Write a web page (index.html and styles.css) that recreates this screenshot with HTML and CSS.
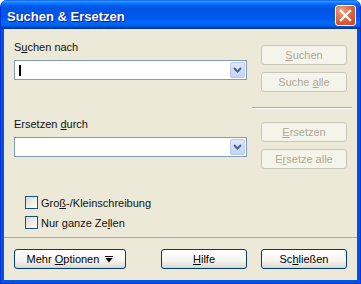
FILE: index.html
```html
<!DOCTYPE html>
<html>
<head>
<meta charset="utf-8">
<link rel="stylesheet" href="styles.css">
</head>
<body>
<div class="window">
	<div class="titlebar">
		<span class="title">Suchen &amp; Ersetzen</span>
		<span class="close">
			<svg width="13" height="13" viewBox="0 0 13 13"><path d="M2 2 L11 11 M11 2 L2 11" stroke="#fff" stroke-width="2.4" stroke-linecap="square"/></svg>
		</span>
	</div>
	<div class="client">
		<div class="group first">
			<div class="field">
				<div class="label">S<u>u</u>chen nach</div>
				<div class="combo">
					<span class="caret"></span>
					<span class="drop"><svg width="9" height="6" viewBox="0 0 9 6"><path d="M1 1 L4.5 4.5 L8 1" fill="none" stroke="#4d6185" stroke-width="2"/></svg></span>
				</div>
			</div>
			<div class="actions">
				<div class="button disabled"><u>S</u>uchen</div>
				<div class="button disabled">Suche <u>a</u>lle</div>
			</div>
		</div>
		<div class="rule"></div>
		<div class="group">
			<div class="field">
				<div class="label">Ersetzen <u>d</u>urch</div>
				<div class="combo">
					<span class="drop"><svg width="9" height="6" viewBox="0 0 9 6"><path d="M1 1 L4.5 4.5 L8 1" fill="none" stroke="#4d6185" stroke-width="2"/></svg></span>
				</div>
			</div>
			<div class="actions">
				<div class="button disabled"><u>E</u>rsetzen</div>
				<div class="button disabled">E<u>r</u>setze alle</div>
			</div>
		</div>
		<div class="options">
			<div class="check"><span class="box"></span><span>Gro<u>ß</u>-/Kleinschreibung</span></div>
			<div class="check"><span class="box"></span><span>Nur ganze Ze<u>l</u>len</span></div>
		</div>
		<div class="footer">
			<div class="button more">Mehr <u>O</u>ptionen <svg width="8" height="9" viewBox="0 0 8 9"><path d="M0 1.5 H8" stroke="#000" stroke-width="1"/><path d="M0.5 3 H7.5 L4 7.5 Z" fill="#000"/></svg></div>
			<div class="button"><u>H</u>ilfe</div>
			<div class="button">Sc<u>h</u>ließen</div>
		</div>
	</div>
</div>
</body>
</html>
```

FILE: styles.css
```css
body
{
	margin: 0;
	background: #fff;
	font-family: "Liberation Sans", Arial, sans-serif;
	font-size: 11px;
	color: #000;
}

u
{
	text-decoration-thickness: 1px;
	text-underline-offset: 1px;
}

.window
{
	width: 361px;
	height: 284px;
	box-sizing: border-box;
	display: flex;
	flex-direction: column;
	background: #0054e3;
	border: 1px solid #0831d9;
	border-top: 0;
	border-radius: 7px 7px 0 0;
	overflow: hidden;
}

.titlebar
{
	height: 29px;
	flex: none;
	display: flex;
	align-items: center;
	justify-content: space-between;
	padding: 1px 4px 0 6px;
	box-sizing: border-box;
	background: linear-gradient(to bottom, #0058ee 0%, #3593ff 4%, #288eff 7%, #127dff 10%, #036ffc 14%, #0262ee 18%, #0057e5 24%, #0054e3 30%, #0055eb 56%, #005bf5 66%, #026afe 76%, #0062ef 86%, #0052d6 92%, #0040ab 96%, #003092 100%);
}

.title
{
	color: #fff;
	font-weight: bold;
	font-size: 13px;
	text-shadow: 1px 1px #0a1883;
	padding-top: 2px;
}

.close
{
	width: 21px;
	height: 21px;
	box-sizing: border-box;
	border: 1px solid #fff;
	border-radius: 3px;
	display: flex;
	align-items: center;
	justify-content: center;
	background: radial-gradient(circle at 30% 25%, #f0a78c 0%, #e36b44 40%, #c8401a 100%);
}

.client
{
	flex: 1;
	margin: 0 3px 3px;
	background: #ece9d8;
	display: flex;
	flex-direction: column;
	padding: 0 10px;
}

.group
{
	display: flex;
	gap: 14px;
}

.group.first
{
	margin-top: 16px;
}

.field
{
	width: 233px;
	margin-top: -5px;
}

.label
{
	line-height: 14px;
	height: 14px;
	color: #111;
}

.combo
{
	margin-top: 6px;
	height: 20px;
	box-sizing: border-box;
	border: 1px solid #7f9db9;
	background: #fff;
	display: flex;
	align-items: center;
	padding: 1px;
}

.caret
{
	width: 2px;
	height: 11px;
	background: #000;
	margin-left: 3px;
}

.drop
{
	margin-left: auto;
	width: 15px;
	height: 16px;
	box-sizing: border-box;
	border: 1px solid #b9c9ef;
	border-radius: 2px;
	background: linear-gradient(to bottom, #e0e9fe, #c1d3fb);
	display: flex;
	align-items: center;
	justify-content: center;
}

.actions
{
	width: 86px;
	display: flex;
	flex-direction: column;
	gap: 7px;
}

.button
{
	width: 86px;
	height: 20px;
	box-sizing: border-box;
	border: 1px solid #003c74;
	border-radius: 3px;
	background: linear-gradient(to bottom, #ffffff 0%, #f5f4f0 60%, #e3e0d6 90%, #d6d0c5 100%);
	text-align: center;
	line-height: 18px;
	white-space: nowrap;
}

.button.disabled
{
	border-color: #c9c7ba;
	background: #f5f4ea;
	color: #aca899;
}

.rule
{
	margin: 15px -5px 13px 238px;
	height: 0;
	border-top: 1px solid #aca899;
	border-bottom: 1px solid #fff;
}

.options
{
	margin-top: 27px;
	padding-left: 11px;
	display: flex;
	flex-direction: column;
	gap: 7px;
}

.check
{
	display: flex;
	align-items: center;
	height: 13px;
	color: #111;
}

.box
{
	width: 13px;
	height: 13px;
	box-sizing: border-box;
	border: 1px solid #1c5180;
	background: linear-gradient(135deg, #dcdad0, #ffffff);
	margin-right: 3px;
}

.footer
{
	margin: 8px -10px 0;
	padding: 11px 10px 0;
	border-top: 1px solid #aca899;
	display: flex;
	gap: 14px;
}

.button.more
{
	width: 112px;
	margin-right: auto;
}

.button.more svg
{
	margin-left: 3px;
	vertical-align: -1px;
}
```
